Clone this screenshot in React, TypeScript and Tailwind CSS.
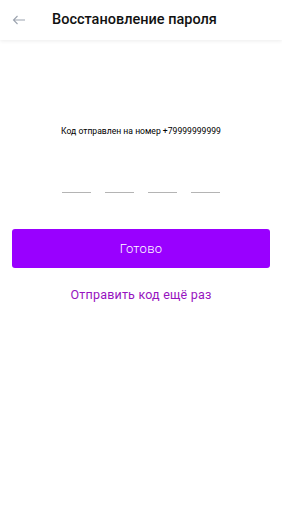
import React from 'react';

const App = () => {
  return (
    <div className="min-h-screen bg-white" style={{ fontFamily: 'Roboto, "Noto Sans", sans-serif' }}>
      <div className="flex h-10 items-center bg-white shadow-[0_1px_4px_rgba(0,0,0,0.08)]">
        <button className="ml-[7px] flex h-6 w-6 items-center justify-center text-gray-400">
          <svg width="14" height="10" viewBox="0 0 14 10" fill="none" stroke="#9ca3af" strokeWidth="1.1">
            <path d="M13 5H1.5M5.5 1L1.5 5l4 4" />
          </svg>
        </button>
        <h1 className="ml-[21px] text-[14.5px] font-medium text-[#111]">Восстановление пароля</h1>
      </div>

      <p className="mt-[85px] text-center text-[8.6px] text-black">Код отправлен на номер +79999999999</p>

      <div className="mt-[54px] flex justify-center gap-[14px]">
        {[0, 1, 2, 3].map((i) => (
          <div key={i} className="h-[1px] w-[29px] bg-[#b4b4b4]" />
        ))}
      </div>

      <div className="mt-[36px] px-3">
        <button className="h-[39px] w-full rounded-[3px] bg-[#9900ff] text-[13px] font-light tracking-[0.3px] text-white">
          Готово
        </button>
      </div>

      <p className="mt-[18px] text-center text-[12.5px] tracking-[0.2px] text-[#9713c0]">Отправить код ещё раз</p>
    </div>
  );
};

export default App;
